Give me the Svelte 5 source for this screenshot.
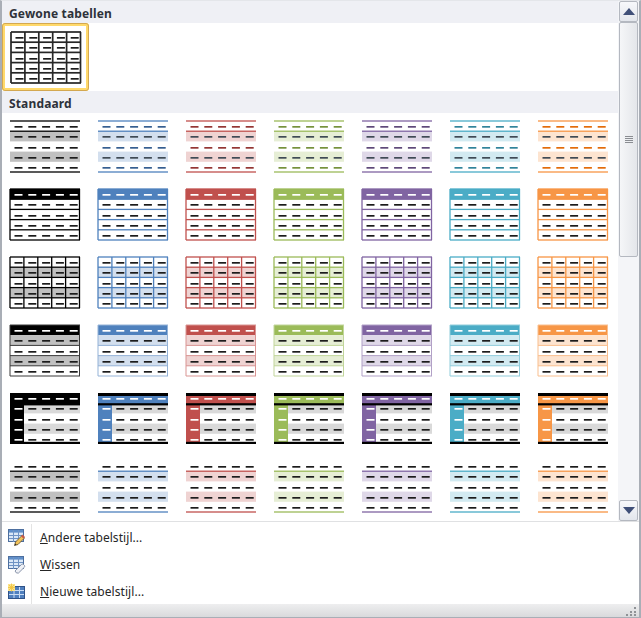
<script>
  const palette = [
    { c: '#000000', dark: '#2a2a2a', tint: '#c0c0c0', soft: '#3a3a3a' },
    { c: '#4f81bd', dark: '#365f91', tint: '#d3dfee', soft: '#95b3d7' },
    { c: '#c0504d', dark: '#943634', tint: '#efd3d2', soft: '#d99594' },
    { c: '#9bbb59', dark: '#76923c', tint: '#e6eed5', soft: '#c2d69b' },
    { c: '#8064a2', dark: '#5f497a', tint: '#dfd8e8', soft: '#b2a1c7' },
    { c: '#4bacc6', dark: '#31849b', tint: '#d2eaf1', soft: '#92cddc' },
    { c: '#f79646', dark: '#e36c0a', tint: '#fde4d0', soft: '#fabf8f' }
  ];
  const ink = '#1c1c1c';
  const rowY = (i) => 1 + 10.2 * i;
  const colX = (j) => 1 + 13.9 * j;
  const R = (x, y, w, h, f) => ({ x, y, w, h, f });

  function dashes(colorOf) {
    const out = [];
    for (let i = 0; i < 5; i++)
      for (let j = 0; j < 5; j++) {
        out.push(R(5.5 + 13.8 * j, Math.round(6.2 + 10.2 * i), 8, 1.7, colorOf(i, j)));
      }
    return out;
  }
  function hLine(i, f, t = 1.3) { return R(1, rowY(i) - t / 2, 70, t, f); }
  function vLine(j, f, t = 1.3) { return R(colX(j) - t / 2, 1, t, 51, f); }
  function band(i, f) { return R(1, rowY(i), 70, 10.2, f); }

  function plain() {
    const s = [];
    for (let i = 0; i <= 5; i++) s.push(hLine(i, '#262626', 1.7));
    for (let j = 0; j <= 5; j++) s.push(vLine(j, '#262626', 1.7));
    return [...s, ...dashes(() => ink)];
  }
  function lightLines(p) {
    return [
      band(1, p.tint), band(3, p.tint),
      hLine(0, p.c), hLine(1, p.c), hLine(5, p.c),
      ...dashes((i) => (p.c === '#000000' ? ink : i % 2 ? '#3f4a55' : p.dark))
    ];
  }
  function boxed(p) {
    const s = [R(1, 1, 70, 10.2, p.c)];
    for (let i = 0; i <= 5; i++) s.push(hLine(i, p.c));
    s.push(vLine(0, p.c), vLine(5, p.c));
    return [...s, ...dashes((i) => (i === 0 ? '#ffffff' : ink))];
  }
  function grid(p) {
    const s = [band(1, p.tint), band(3, p.tint)];
    for (let i = 0; i <= 5; i++) s.push(hLine(i, p.c));
    for (let j = 0; j <= 5; j++) s.push(vLine(j, p.c));
    return [...s, ...dashes(() => ink)];
  }
  function banded(p) {
    const s = [R(1, 1, 70, 10.2, p.c), band(1, p.tint), band(3, p.tint)];
    for (let i = 2; i <= 4; i++) s.push(hLine(i, p.soft, 1));
    s.push(hLine(0, p.soft, 1), hLine(5, p.soft, 1), vLine(0, p.soft, 1), vLine(5, p.soft, 1));
    return [...s, ...dashes((i) => (i === 0 ? '#ffffff' : ink))];
  }
  function strong(p) {
    const s = [
      band(1, '#d9d9d9'), band(3, '#d9d9d9'),
      R(1, 1, 70, 11, p.c),
      R(1, 1, 14, 50, p.c),
      R(1, 1, 70, 3, '#000000'),
      R(1, 11.2, 70, 2.2, '#000000'),
      R(1, 49.8, 70, 2.2, '#000000')
    ];
    return [...s, ...dashes((i, j) => (i === 0 || j === 0 ? '#ffffff' : ink))];
  }
  function subtle(p) {
    return [
      band(1, p.tint), band(3, p.tint),
      hLine(1, p.c), hLine(5, p.c),
      ...dashes(() => ink)
    ];
  }
  const makers = [lightLines, boxed, grid, banded, strong, subtle];
  const thumbs = makers.flatMap((m) => palette.map((p) => m(p)));
  const plainThumb = plain();

  const items = [
    { first: 'A', rest: 'ndere tabelstijl...', icon: 'pencil' },
    { first: 'W', rest: 'issen', icon: 'eraser' },
    { first: 'N', rest: 'ieuwe tabelstijl...', icon: 'new' }
  ];
  const gripBars = [0, 1, 2, 3];
</script>

{#snippet thumb(shapes)}
  <svg class="thumb" width="72" height="54" viewBox="0 0 72 54">
    {#each shapes as s}
      <rect x={s.x} y={s.y} width={s.w} height={s.h} fill={s.f} />
    {/each}
  </svg>
{/snippet}

{#snippet tableIcon()}
  <rect x="0.5" y="0.5" width="15" height="12" fill="#dbe8f7" stroke="#4d6f9f" />
  <rect x="1" y="1" width="14" height="2.6" fill="#5f8fca" />
  <path d="M5.5 1v12M10.5 1v12M1 6.5h14M1 9.5h14" stroke="#6f93c4" fill="none" />
{/snippet}

<div class="window">
  <div class="main">
    <div class="gallery">
      <div class="heading">Gewone tabellen</div>
      <div class="plain">
        <div class="selected">{@render thumb(plainThumb)}</div>
      </div>
      <div class="heading">Standaard</div>
      <div class="grid">
        {#each thumbs as t}
          <div class="cell">{@render thumb(t)}</div>
        {/each}
      </div>
    </div>
    <div class="scrollbar">
      <div class="btn">
        <svg width="12" height="7" viewBox="0 0 12 7"><path d="M6 0 L12 7 H0 Z" fill="#3f4f78" /></svg>
      </div>
      <div class="scroll-thumb">
        <div class="grip">
          {#each gripBars as b}<span></span>{/each}
        </div>
      </div>
      <div class="track"></div>
      <div class="btn">
        <svg width="12" height="7" viewBox="0 0 12 7"><path d="M0 0 H12 L6 7 Z" fill="#3f4f78" /></svg>
      </div>
    </div>
  </div>
  <div class="menu">
    {#each items as item}
      <div class="item">
        <div class="icon">
          <svg width="18" height="18" viewBox="0 0 18 18">
            {#if item.icon === 'pencil'}
              {@render tableIcon()}
              <path d="M6.5 16.5 L7.5 13 L14 6.5 L16.5 9 L10 15.5 Z" fill="#f2c35a" stroke="#5b4a2a" stroke-width="0.8" />
              <path d="M13 7.5 L14.5 5.5 L17 8 L15.5 9.5 Z" fill="#c85a4a" />
              <path d="M6.5 16.5 L7.5 14.5 L8.5 15.5 Z" fill="#222" />
            {:else if item.icon === 'eraser'}
              {@render tableIcon()}
              <path d="M7 15 L13.5 8.5 Q14.5 7.8 15.5 8.5 L16.5 9.5 Q17 10.5 16.3 11.3 L10.5 17 H8.5 Z" fill="#eef0f5" stroke="#7f8ba3" stroke-width="0.9" />
            {:else}
              <rect x="0.5" y="3.5" width="16" height="12" fill="#4f7fbe" stroke="#2f5288" />
              <path d="M6 4v11M11.5 4v11M1 7.5h15M1 11.5h15" stroke="#c9dcf3" fill="none" />
              <rect x="0" y="1" width="7" height="7" fill="#fbe38a" />
              <path d="M3.5 0.5v8M0 4.5h7M1 2l5 5M6 2l-5 5" stroke="#f0c23c" stroke-width="0.8" fill="none" />
            {/if}
          </svg>
        </div>
        <div class="label"><u>{item.first}</u>{item.rest}</div>
      </div>
    {/each}
  </div>
  <div class="statusbar">
    <svg width="12" height="10" viewBox="0 0 12 10">
      <path d="M9 1h2v2H9zM5 5h2v2H5zM9 5h2v2H9zM1 8h2v2H1zM5 8h2v2H5zM9 8h2v2H9z" fill="#8f9296" />
    </svg>
  </div>
</div>

<style>
  :global(body) {
    margin: 0;
    background: #fff;
  }
  .window {
    width: 641px;
    height: 618px;
    box-sizing: border-box;
    display: flex;
    flex-direction: column;
    background: #fff;
    border-top: 1px solid #e4e6ea;
    border-left: 2px solid #a9aeb6;
    border-right: 2px solid #a9aeb6;
    border-bottom: 1px solid #a9aeb6;
    font-family: "Noto Sans", "Open Sans", sans-serif;
    overflow: hidden;
  }
  .main {
    display: flex;
    height: 520px;
    flex: none;
  }
  .gallery {
    width: 616px;
    flex: none;
    overflow: hidden;
  }
  .heading {
    height: 22px;
    box-sizing: border-box;
    padding: 4px 0 0 7px;
    background: #eff0f5;
    font-size: 12px;
    line-height: 17px;
    font-weight: 700;
    letter-spacing: 0.15px;
    color: #2e323a;
  }
  .plain {
    height: 68px;
  }
  .selected {
    width: 87px;
    height: 68px;
    box-sizing: border-box;
    padding: 5px 0 0 5px;
    background: #fff;
    border: 3px solid #ffd96b;
    outline: 1px solid #d3a851;
    outline-offset: -1px;
    border-radius: 3px;
  }
  .grid {
    display: grid;
    grid-template-columns: repeat(7, 88px);
    grid-auto-rows: 68px;
    padding-left: 7px;
  }
  .cell {
    padding-top: 7px;
  }
  .thumb {
    display: block;
  }
  .scrollbar {
    width: 21px;
    flex: none;
    box-sizing: border-box;
    padding: 0 1px;
    display: flex;
    flex-direction: column;
    background: #f4f5f8;
  }
  .btn {
    height: 21px;
    flex: none;
    box-sizing: border-box;
    border: 1px solid #b4b8c0;
    border-radius: 2px;
    background: linear-gradient(#f7f8fb, #e3e6ec);
    display: flex;
    align-items: center;
    justify-content: center;
  }
  .scroll-thumb {
    height: 235px;
    flex: none;
    box-sizing: border-box;
    border: 1px solid #b4b8c0;
    border-radius: 2px;
    background: linear-gradient(90deg, #f5f6f8, #e4e6ea);
    display: flex;
    align-items: center;
    justify-content: center;
  }
  .grip {
    display: flex;
    flex-direction: column;
    gap: 1px;
  }
  .grip span {
    display: block;
    width: 8px;
    height: 1px;
    background: #8a8d92;
  }
  .track {
    flex: 1;
    background: #f4f5f8;
  }
  .menu {
    flex: none;
    border-top: 1px solid #e0e1e3;
    padding-top: 2px;
    height: 83px;
    box-sizing: border-box;
  }
  .item {
    height: 27px;
    display: flex;
    align-items: center;
  }
  .icon {
    width: 30px;
    height: 27px;
    flex: none;
    box-sizing: border-box;
    border-right: 1px solid #e3e3e3;
    padding-left: 6px;
    display: flex;
    align-items: center;
  }
  .label {
    padding-left: 8px;
    font-size: 12px;
    letter-spacing: 0.06px;
    color: #262626;
  }
  .statusbar {
    flex: 1;
    background: linear-gradient(#eeeeef, #d9dadc);
    display: flex;
    justify-content: flex-end;
    align-items: flex-end;
    padding: 0 2px 1px 0;
  }
</style>
